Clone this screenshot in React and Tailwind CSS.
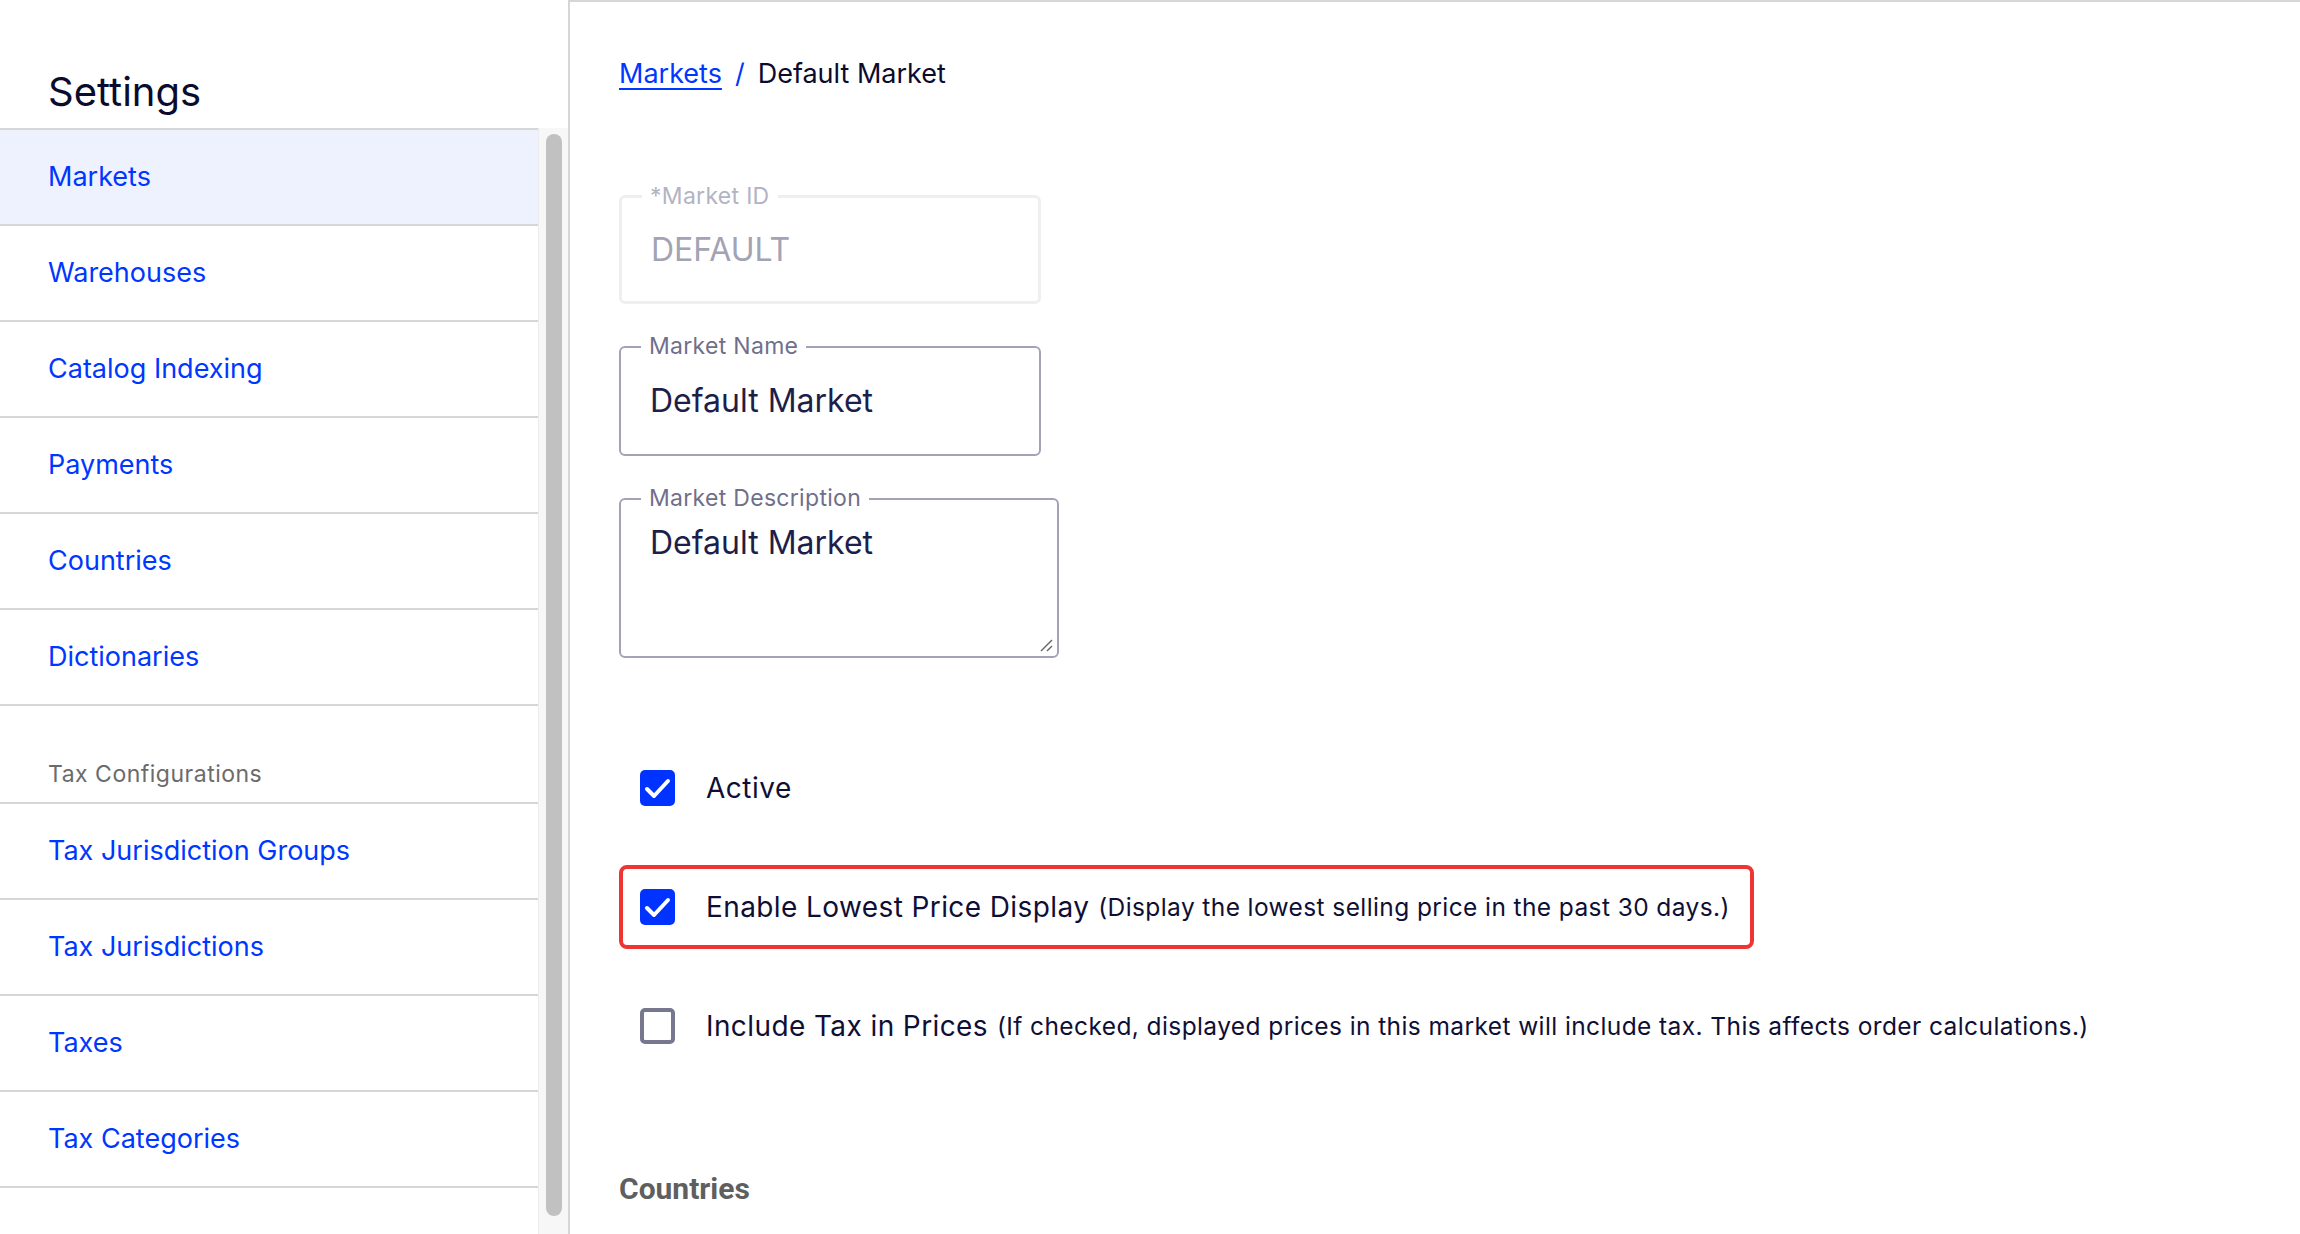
import { useState } from "react";

const navItems = [
  { id: "markets", label: "Markets" },
  { id: "warehouses", label: "Warehouses" },
  { id: "catalog", label: "Catalog Indexing" },
  { id: "payments", label: "Payments" },
  { id: "countries", label: "Countries" },
  { id: "dictionaries", label: "Dictionaries" },
];

const taxItems = [
  { id: "taxGroups", label: "Tax Jurisdiction Groups" },
  { id: "taxJur", label: "Tax Jurisdictions" },
  { id: "taxes", label: "Taxes" },
  { id: "taxCat", label: "Tax Categories" },
];

function Checkbox({ checked, onChange }) {
  if (checked) {
    return (
      <button
        onClick={onChange}
        className="w-[35px] h-[36px] rounded-[5px] bg-[#0033ff] flex items-center justify-center shrink-0"
      >
        <svg width="35" height="36" viewBox="0 0 35 36">
          <polyline
            points="7,19 14,26 28,11"
            fill="none"
            stroke="white"
            strokeWidth="4"
            strokeLinecap="round"
            strokeLinejoin="round"
          />
        </svg>
      </button>
    );
  }
  return (
    <button
      onClick={onChange}
      className="w-[35px] h-[36px] rounded-[5px] border-[4px] border-[#77778f] bg-white shrink-0"
    />
  );
}

function OutlinedField({ label, value, disabled, width, height, multiline }) {
  return (
    <div
      className={`relative rounded-[6px] ${
        disabled ? "border-[3px] border-[#efeff2]" : "border-2 border-[#a3a3b8]"
      } ${width} ${height} ${multiline ? "pt-[23px]" : "flex items-center"} pl-[29px]`}
    >
      <span
        className={`absolute left-[20px] top-[-16px] bg-white px-[8px] text-[23px] leading-[28px] tracking-[0.3px] ${
          disabled ? "text-[#b3b3c3]" : "text-[#6f6f8c]"
        }`}
      >
        {label}
      </span>
      <span
        className={`text-[32px] leading-[40px] ${
          disabled ? "text-[#a3a3b5]" : "text-[#1e1e4b]"
        }`}
      >
        {value}
      </span>
      {multiline && (
        <svg className="absolute right-[4px] bottom-[4px]" width="14" height="14" viewBox="0 0 14 14">
          <line x1="2" y1="13" x2="13" y2="2" stroke="#666" strokeWidth="1.5" />
          <line x1="8" y1="13" x2="13" y2="8" stroke="#666" strokeWidth="1.5" />
        </svg>
      )}
    </div>
  );
}

export default function App() {
  const [active, setActive] = useState(true);
  const [lowest, setLowest] = useState(true);
  const [incTax, setIncTax] = useState(false);

  return (
    <div className="flex w-[2300px] h-[1234px] overflow-hidden bg-white font-['Inter','Liberation_Sans',sans-serif]">
      {/* Sidebar */}
      <div className="w-[568px] shrink-0 flex flex-col">
        <div className="h-[128px] shrink-0 pl-[48px] pt-[64px]">
          <h1 className="text-[40px] leading-[56px] text-[#0b0b2e]">Settings</h1>
        </div>
        <div className="flex flex-1 min-h-0">
          <nav className="w-[538px] shrink-0 border-t-2 border-[#d6d6d6]">
            {navItems.map((item, i) => (
              <a
                key={item.id}
                className={`flex items-center h-[96px] pl-[48px] border-b-2 border-[#d6d6d6] text-[27px] text-[#0037ff] ${
                  i === 0 ? "bg-[#eef1fe]" : ""
                }`}
              >
                {item.label}
              </a>
            ))}
            <div className="h-[98px] pl-[48px] pt-[52px] border-b-2 border-[#d6d6d6] text-[23px] leading-[32px] tracking-[0.5px] text-[#6b6b6b]">
              Tax Configurations
            </div>
            {taxItems.map((item) => (
              <a
                key={item.id}
                className="flex items-center h-[96px] pl-[48px] border-b-2 border-[#d6d6d6] text-[27px] text-[#0037ff]"
              >
                {item.label}
              </a>
            ))}
          </nav>
          {/* scrollbar */}
          <div className="w-[30px] shrink-0 bg-[#f7f7f7] border-l border-[#ececec] pt-[6px] pl-[7px]">
            <div className="w-[16px] h-[1082px] rounded-full bg-[#c1c1c1]" />
          </div>
        </div>
      </div>

      {/* Main */}
      <div className="flex-1 border-l-2 border-t-2 border-[#d6d6d6] pl-[49px]">
        <div className="pt-[54px] flex items-center gap-[13px] text-[27px] leading-[36px]">
          <a className="text-[#0037ff] underline underline-offset-[5px]">Markets</a>
          <span className="text-[#0037ff]">/</span>
          <span className="text-[#0b0b2e]">Default Market</span>
        </div>

        <div className="mt-[103px] flex flex-col gap-[42px]">
          <OutlinedField label="*Market ID" value="DEFAULT" disabled width="w-[422px]" height="h-[109px]" />
          <OutlinedField label="Market Name" value="Default Market" width="w-[422px]" height="h-[110px]" />
          <OutlinedField
            label="Market Description"
            value="Default Market"
            multiline
            width="w-[440px]"
            height="h-[160px]"
          />
        </div>

        <div className="mt-[88px] flex flex-col gap-[35px] text-[#0f0f35] whitespace-nowrap">
          <div className="w-fit h-[84px] flex items-center pl-[17px] pr-[20px] border-4 border-transparent rounded-[8px]">
            <Checkbox checked={active} onChange={() => setActive(!active)} />
            <span className="ml-[31px] text-[28px] tracking-[0.5px]">Active</span>
          </div>
          <div className="w-[1135px] h-[84px] flex items-center pl-[17px] pr-[20px] border-4 border-[#f03434] rounded-[8px]">
            <Checkbox checked={lowest} onChange={() => setLowest(!lowest)} />
            <span className="ml-[31px] text-[28px] tracking-[0.4px]">Enable Lowest Price Display</span>
            <span className="ml-[9px] text-[24.5px] tracking-[0.4px]">
              (Display the lowest selling price in the past 30 days.)
            </span>
          </div>
          <div className="w-fit h-[84px] flex items-center pl-[17px] pr-[20px] border-4 border-transparent rounded-[8px]">
            <Checkbox checked={incTax} onChange={() => setIncTax(!incTax)} />
            <span className="ml-[31px] text-[28px] tracking-[0.4px]">Include Tax in Prices</span>
            <span className="ml-[9px] text-[24.5px] tracking-[0.4px]">
              (If checked, displayed prices in this market will include tax. This affects order calculations.)
            </span>
          </div>
        </div>

        <h2 className="mt-[98px] font-['Roboto',sans-serif] font-bold text-[30px] text-[#5f5f5f]">
          Countries
        </h2>
      </div>
    </div>
  );
}
